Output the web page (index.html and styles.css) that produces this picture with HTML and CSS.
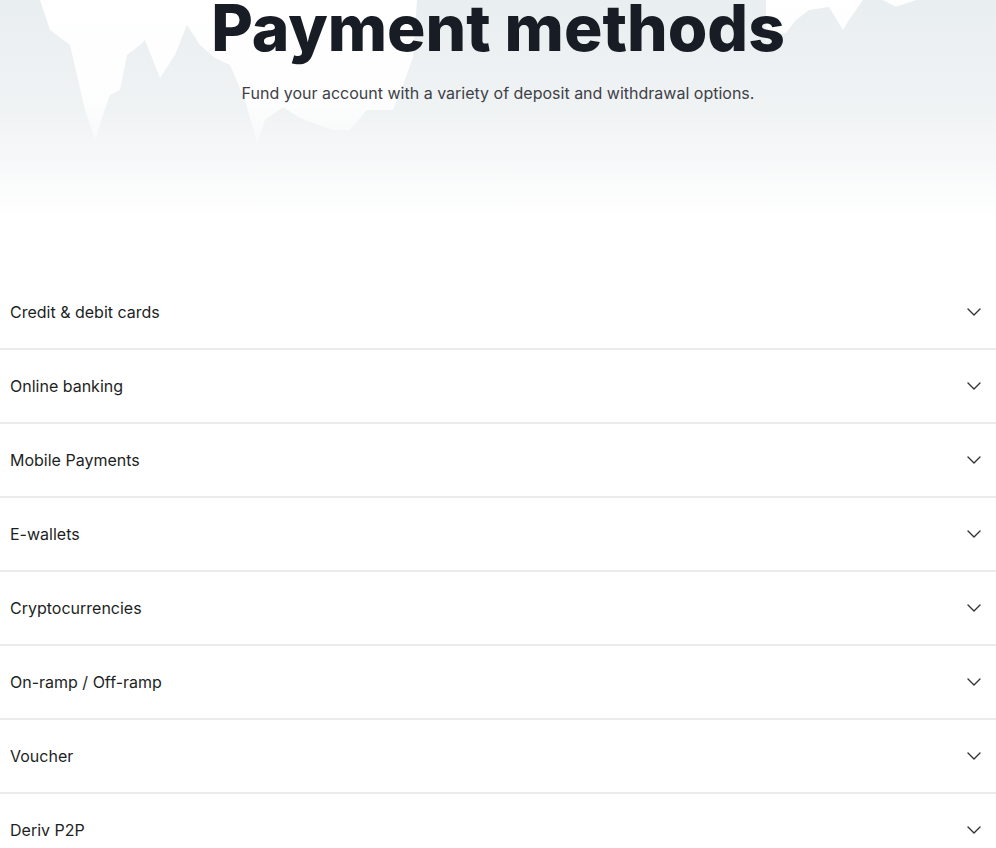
FILE: index.html
```html
<!DOCTYPE html>
<html lang="en">

<head>
    <meta charset="UTF-8">
    <meta name="viewport" content="width=device-width, initial-scale=1.0">
    <title>Payment methods</title>
    <link rel="stylesheet" href="styles.css">
</head>

<body>
    <section class="hero">
        <!-- market chart silhouette behind the title -->
        <svg class="hero-bg" viewBox="0 0 996 220" preserveAspectRatio="none" aria-hidden="true">
            <defs>
                <linearGradient id="fade" x1="0" y1="0" x2="0" y2="1">
                    <stop offset="0" stop-color="#e9eef0" />
                    <stop offset="0.5" stop-color="#f0f3f4" />
                    <stop offset="1" stop-color="#ffffff" />
                </linearGradient>
                <linearGradient id="peaks" x1="0" y1="0" x2="0" y2="1">
                    <stop offset="0" stop-color="#ffffff" />
                    <stop offset="0.7" stop-color="#ffffff" stop-opacity="0.9" />
                    <stop offset="1" stop-color="#ffffff" stop-opacity="0.4" />
                </linearGradient>
            </defs>
            <rect x="0" y="0" width="996" height="220" fill="url(#fade)" />
            <g fill="url(#peaks)">
                <polygon points="40,0 50,30 70,45 85,110 95,140 103,115 110,95 120,90 127,55 140,45 145,40 160,78 175,55 187,25 200,45 215,58 230,65 245,100 257,143 265,120 283,107 300,118 333,130 350,130 367,110 393,110 405,80 413,57 417,0" />
                <polygon points="766,0 766,43 776,36 786,33 796,20 809,10 829,7 843,30 849,20 863,0" />
                <polygon points="883,0 896,7 916,0" />
            </g>
        </svg>
        <h1 class="hero-title">Payment methods</h1>
        <p class="hero-text">Fund your account with a variety of deposit and withdrawal options.</p>
    </section>

    <main class="methods">
        <div class="method">
            <span>Credit &amp; debit cards</span>
            <svg class="chevron" viewBox="0 0 14 8"><path d="M1 1l6 6 6-6" /></svg>
        </div>
        <div class="method">
            <span>Online banking</span>
            <svg class="chevron" viewBox="0 0 14 8"><path d="M1 1l6 6 6-6" /></svg>
        </div>
        <div class="method">
            <span>Mobile Payments</span>
            <svg class="chevron" viewBox="0 0 14 8"><path d="M1 1l6 6 6-6" /></svg>
        </div>
        <div class="method">
            <span>E-wallets</span>
            <svg class="chevron" viewBox="0 0 14 8"><path d="M1 1l6 6 6-6" /></svg>
        </div>
        <div class="method">
            <span>Cryptocurrencies</span>
            <svg class="chevron" viewBox="0 0 14 8"><path d="M1 1l6 6 6-6" /></svg>
        </div>
        <div class="method">
            <span>On-ramp / Off-ramp</span>
            <svg class="chevron" viewBox="0 0 14 8"><path d="M1 1l6 6 6-6" /></svg>
        </div>
        <div class="method">
            <span>Voucher</span>
            <svg class="chevron" viewBox="0 0 14 8"><path d="M1 1l6 6 6-6" /></svg>
        </div>
        <div class="method">
            <span>Deriv P2P</span>
            <svg class="chevron" viewBox="0 0 14 8"><path d="M1 1l6 6 6-6" /></svg>
        </div>
    </main>
</body>

</html>
```

FILE: styles.css
```css
body {
    margin: 0;
    font-family: Inter, "Noto Sans", sans-serif;
    color: #1c1f24;
    background-color: #fff;
}

.hero {
    position: relative;
    height: 276px;
    text-align: center;
    overflow: hidden;
}

.hero-bg {
    position: absolute;
    top: 0;
    left: 0;
    width: 100%;
    height: 220px;
}

.hero-title {
    position: relative;
    margin: -10px 0 0;
    font-size: 64px;
    line-height: 76px;
    font-weight: 800;
    color: #181c25;
}

.hero-text {
    position: relative;
    margin: 15px 0 0;
    font-size: 16px;
    line-height: 24px;
    color: #3e4148;
}

.methods {
    display: flex;
    flex-direction: column;
}

.method {
    display: flex;
    align-items: center;
    justify-content: space-between;
    height: 72px;
    padding: 0 15px 0 10px;
    border-bottom: 2px solid #ebebeb;
    font-size: 16px;
}

.chevron {
    width: 14px;
    height: 8px;
    fill: none;
    stroke: #333;
    stroke-width: 1.4;
    stroke-linecap: round;
    stroke-linejoin: round;
}
```
